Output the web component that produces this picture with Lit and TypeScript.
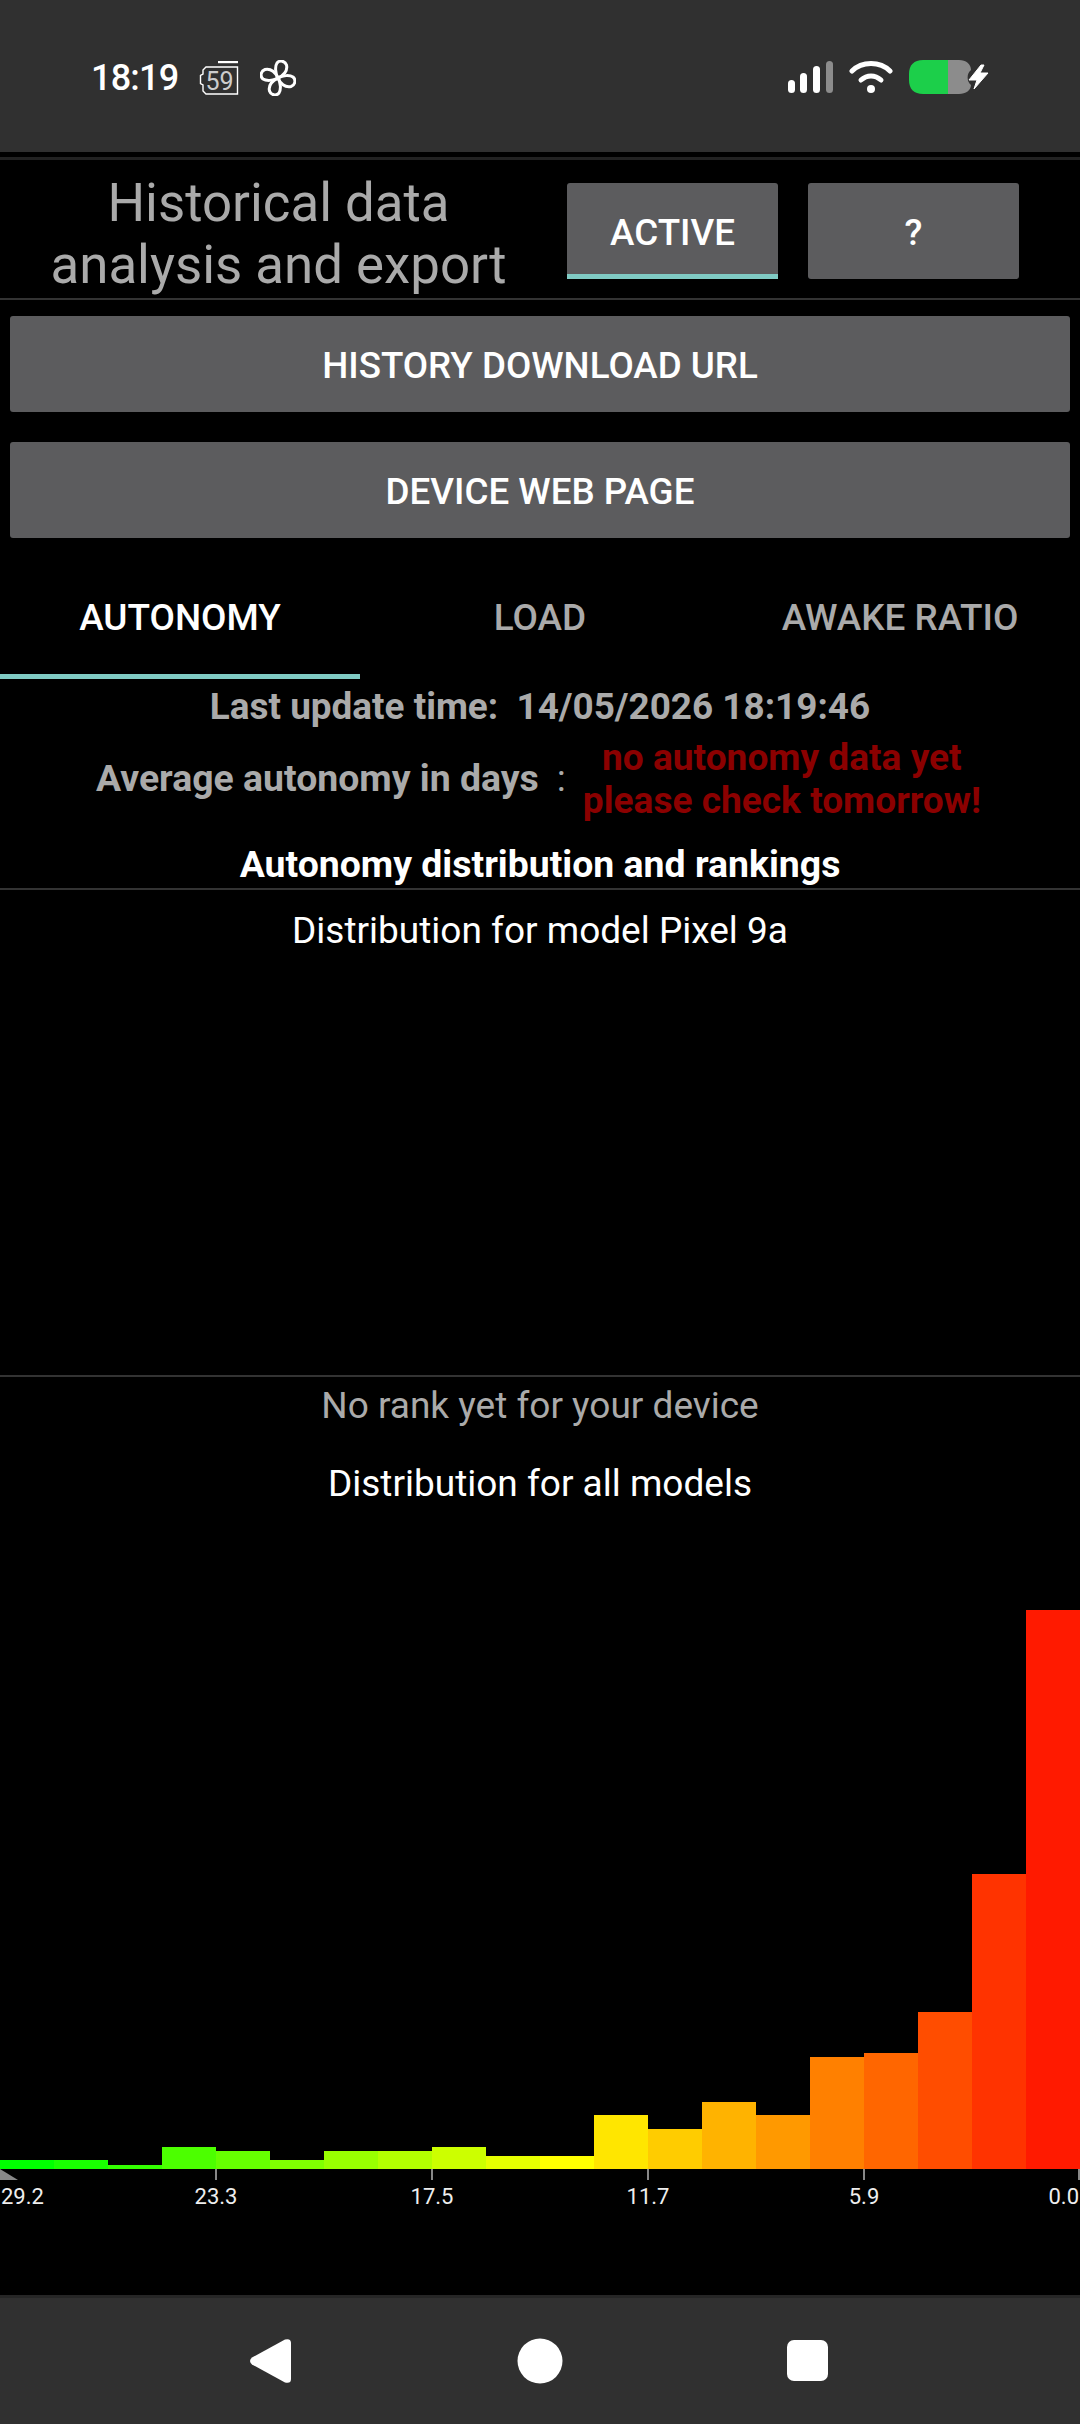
import { LitElement, html, css, svg } from 'lit';
import { customElement } from 'lit/decorators.js';

// histogram counts, oldest bin first; one count is about 4.47px tall
const BINS = [2, 2, 1, 5, 4, 2, 4, 4, 5, 3, 3, 12, 9, 15, 12, 25, 26, 35, 66, 125];
const UNIT = 4.475;
const BIN_COLORS = [
  '#00ff00', '#19ff00', '#33ff00', '#4cff00', '#66ff00', '#80ff00', '#99ff00', '#b3ff00', '#ccff00', '#e6ff00',
  '#ffff00', '#ffe600', '#ffcc00', '#ffb300', '#ff9900', '#ff8000', '#ff6600', '#ff4d00', '#ff3300', '#ff1a00',
];
const TICKS = [
  { label: '23.3', x: 216 },
  { label: '17.5', x: 432 },
  { label: '11.7', x: 648 },
  { label: '5.9', x: 864 },
];

const PETAL = 'M18 18C15 13 15 6 17 3C19.500 0 25 .5 26.500 5C28 11 23 16 18 18Z';

@customElement('app-root')
export class AppRoot extends LitElement {
  static styles = css`
    :host {
      display: block;
      width: 1080px;
      height: 2424px;
      background: #000;
      font-family: Roboto, 'Liberation Sans', sans-serif;
      color: #fff;
      overflow: hidden;
    }
    .page {
      display: flex;
      flex-direction: column;
      height: 2424px;
    }

    /* status bar */
    .status {
      height: 152px;
      flex: none;
      box-sizing: border-box;
      background: #303030;
      display: flex;
      align-items: flex-start;
      padding: 60px 91px 0 91px;
    }
    .clock {
      font-size: 36px;
      font-weight: 500;
      line-height: 36px;
      width: 108px;
      letter-spacing: -0.8px;
    }
    .status svg {
      display: block;
      flex: none;
    }
    .timer {
      margin-top: 1px;
    }
    .fan {
      margin-left: 21px;
    }
    .status-right {
      margin-left: auto;
      display: flex;
      align-items: flex-start;
    }
    .signal {
      margin-top: 1px;
    }
    .wifi {
      margin-left: 16px;
    }
    .battery {
      margin-left: 16px;
    }

    .gap {
      flex: none;
      height: 5px;
    }
    .rule {
      flex: none;
      height: 3px;
      background: #222;
    }

    /* header row */
    .head {
      flex: none;
      height: 138px;
      display: flex;
      box-sizing: border-box;
      padding-top: 23px;
    }
    .title {
      width: 557px;
      margin-top: -18px;
      height: 138px;
      display: flex;
      align-items: center;
      justify-content: center;
      text-align: center;
      font-size: 52.8px;
      line-height: 62px;
      color: #aaa;
    }
    .small-btn {
      box-sizing: border-box;
      width: 211px;
      height: 96px;
      margin-left: 10px;
      padding-top: 2px;
      background: #5c5c5e;
      border-radius: 3px;
      display: flex;
      align-items: center;
      justify-content: center;
      font-size: 36.75px;
      font-weight: 500;
    }
    .small-btn + .small-btn {
      margin-left: 30px;
    }
    .small-btn.on {
      border-bottom: 5px solid #80cbc4;
      border-radius: 3px 3px 0 0;
      padding-top: 8px;
    }

    .wide-btn {
      flex: none;
      box-sizing: border-box;
      height: 96px;
      margin: 0 10px;
      padding-top: 2px;
      background: #5c5c5e;
      border-radius: 3px;
      display: flex;
      align-items: center;
      justify-content: center;
      font-size: 36.75px;
      font-weight: 500;
    }
    .wide-btn.first {
      margin-top: 16px;
    }
    .wide-btn.second {
      margin-top: 30px;
    }

    /* tabs */
    .tabs {
      flex: none;
      height: 141px;
      display: flex;
    }
    .tab {
      box-sizing: border-box;
      width: 360px;
      height: 141px;
      padding-top: 57px;
      text-align: center;
      font-size: 36.9px;
      line-height: 46px;
      font-weight: 500;
      color: #aaa;
    }
    .tab.on {
      color: #fff;
      border-bottom: 5px solid #80cbc4;
    }

    .updated {
      flex: none;
      height: 50px;
      margin-top: 2px;
      display: flex;
      align-items: center;
      justify-content: center;
      font-size: 36.9px;
      font-weight: 700;
      color: #aaa;
      white-space: pre;
    }
    .average {
      flex: none;
      height: 84px;
      margin-top: 7px;
      display: flex;
      align-items: center;
      font-size: 37.4px;
      font-weight: 700;
      color: #aaa;
      padding-left: 96px;
    }
    .average .name {
      margin-top: -5px;
    }
    .average .colon {
      margin-left: 18px;
      margin-top: -5px;
      font-weight: 400;
    }
    .average .missing {
      width: 398px;
      margin-left: 17px;
      text-align: center;
      font-size: 37.1px;
      color: #8b0000;
      line-height: 43px;
      margin-top: -2px;
      white-space: nowrap;
    }
    .section {
      flex: none;
      height: 50px;
      margin-top: 17px;
      margin-bottom: -1px;
      display: flex;
      align-items: center;
      justify-content: center;
      font-size: 37.4px;
      font-weight: 700;
    }
    .line {
      flex: none;
      height: 2px;
      background: #333;
    }
    .label {
      flex: none;
      height: 50px;
      display: flex;
      align-items: center;
      justify-content: center;
      font-size: 37px;
    }
    .label.model {
      margin-top: 15px;
    }
    .label.muted {
      margin-top: 3px;
      color: #aaa;
    }
    .label.all {
      margin-top: 28px;
    }
    .empty-chart {
      flex: none;
      height: 420px;
    }

    /* all models histogram */
    .chart {
      flex: none;
      height: 661px;
      display: flex;
      align-items: flex-end;
    }
    .bar {
      width: 54px;
      flex: none;
    }
    .axis {
      position: relative;
      flex: none;
      height: 50px;
      font-size: 22px;
      color: #eee;
    }
    .tick {
      position: absolute;
      top: 0;
      width: 2px;
      height: 11px;
      background: #888;
    }
    .tick-label {
      position: absolute;
      top: 15px;
      line-height: 26px;
      transform: translateX(-50%);
    }
    .thumb {
      position: absolute;
      left: 0;
      top: 0;
      display: block;
    }
    .first-label {
      position: absolute;
      left: 1px;
      top: 15px;
      line-height: 26px;
    }
    .last-label {
      position: absolute;
      right: 1px;
      top: 15px;
      line-height: 26px;
    }
    .spacer {
      flex: 1;
    }

    /* nav bar */
    .nav {
      flex: none;
      height: 129px;
      box-sizing: border-box;
      background: #303030;
      border-top: 3px solid #262626;
      display: flex;
      align-items: center;
      justify-content: center;
    }
    .nav svg {
      display: block;
      margin: -1px 0 0 -2px;
    }
  `;

  private renderStatus() {
    return html`
      <div class="status">
        <div class="clock">18:19</div>
        <svg class="timer" width="40" height="36" viewBox="0 0 40 36">
          <path d="M19 1H39" stroke="#fff" stroke-width="2.400" fill="none" />
          <path d="M38.500 6V33H7L4 30V24L1.500 22.500V14.500L4 13V9L7 6Z" stroke="#fff" stroke-width="1.400" fill="none" />
          <text x="20.500" y="28.500" text-anchor="middle" font-size="25" fill="#ccc" font-family="Roboto, sans-serif">59</text>
        </svg>
        <svg class="fan" width="36" height="36" viewBox="0 0 36 36">
          ${[0, 90, 180, 270].map(
            (a) => svg`<path d=${PETAL} transform="rotate(${a} 18 18)" fill="none" stroke="#fff" stroke-width="3" stroke-linejoin="round" />`,
          )}
        </svg>
        <div class="status-right">
          <svg class="signal" width="45" height="33" viewBox="0 0 45 33">
            <rect x="0" y="19" width="7" height="13" rx="3.500" fill="#fff" />
            <rect x="12" y="12" width="7" height="20" rx="3.500" fill="#fff" />
            <rect x="25" y="5" width="7" height="27" rx="3.500" fill="#fff" />
            <rect x="38" y="0" width="7" height="32" rx="3.500" fill="#8c8c8c" />
          </svg>
          <svg class="wifi" width="44" height="34" viewBox="0 0 44 34">
            <path d="M3 11C13 1 31 1 41 11" fill="none" stroke="#fff" stroke-width="5" stroke-linecap="round" />
            <path d="M12 20C18 14.500 26 14.500 32 20" fill="none" stroke="#fff" stroke-width="5" stroke-linecap="round" />
            <circle cx="22" cy="29" r="4" fill="#fff" />
          </svg>
          <svg class="battery" width="80" height="34" viewBox="0 0 80 34">
            <path d="M39 0H50C57 0 62 4 62 10A10 10 0 0 0 62 25C62 30 57 34 50 34H39Z" fill="#8c8c8c" />
            <path d="M39 0H14C5 0 0 5 0 14V20C0 29 5 34 14 34H39Z" fill="#1ccf4a" />
            <path d="M72 5L60 20H68L65 29L79 13H71L75 5Z" fill="#fff" stroke="#fff" stroke-width="1" stroke-linejoin="round" />
          </svg>
        </div>
      </div>
    `;
  }

  private renderHistogram() {
    return html`
      <div class="chart">
        ${BINS.map(
          (n, i) => html`<div class="bar" style="height:${n * UNIT}px;background:${BIN_COLORS[i]}"></div>`,
        )}
      </div>
      <div class="axis">
        <svg class="thumb" width="18" height="11" viewBox="0 0 18 11"><path d="M0 0L18 11H0Z" fill="#888" /></svg>
        <span class="first-label">29.2</span>
        ${TICKS.map(
          (t) => html`
            <div class="tick" style="left:${t.x - 1}px"></div>
            <span class="tick-label" style="left:${t.x}px">${t.label}</span>
          `,
        )}
        <div class="tick" style="left:1078px"></div>
        <span class="last-label">0.0</span>
      </div>
    `;
  }

  private renderNav() {
    return html`
      <div class="nav">
        <svg width="580" height="46" viewBox="0 0 580 46">
          <path d="M3 19.500L36 1.500Q42 0 42 5V41Q42 46 36 44.500L3 26.500Q-1 23 3 19.500Z" fill="#fff" />
          <circle cx="291" cy="23" r="22.500" fill="#fff" />
          <rect x="538" y="2" width="41" height="41" rx="7" fill="#fff" />
        </svg>
      </div>
    `;
  }

  render() {
    return html`
      <div class="page">
        ${this.renderStatus()}
        <div class="gap"></div>
        <div class="rule"></div>
        <div class="head">
          <div class="title">Historical data<br />analysis and export</div>
          <div class="small-btn on">ACTIVE</div>
          <div class="small-btn">?</div>
        </div>
        <div class="line"></div>
        <div class="wide-btn first">HISTORY DOWNLOAD URL</div>
        <div class="wide-btn second">DEVICE WEB PAGE</div>
        <div class="tabs">
          <div class="tab on">AUTONOMY</div>
          <div class="tab">LOAD</div>
          <div class="tab">AWAKE RATIO</div>
        </div>
        <div class="updated">Last update time:  14/05/2026 18:19:46</div>
        <div class="average">
          <span class="name">Average autonomy in days</span>
          <span class="colon">:</span>
          <div class="missing">no autonomy data yet<br />please check tomorrow!</div>
        </div>
        <div class="section">Autonomy distribution and rankings</div>
        <div class="line"></div>
        <div class="label model">Distribution for model Pixel 9a</div>
        <div class="empty-chart"></div>
        <div class="line"></div>
        <div class="label muted">No rank yet for your device</div>
        <div class="label all">Distribution for all models</div>
        ${this.renderHistogram()}
        <div class="spacer"></div>
        ${this.renderNav()}
      </div>
    `;
  }
}
